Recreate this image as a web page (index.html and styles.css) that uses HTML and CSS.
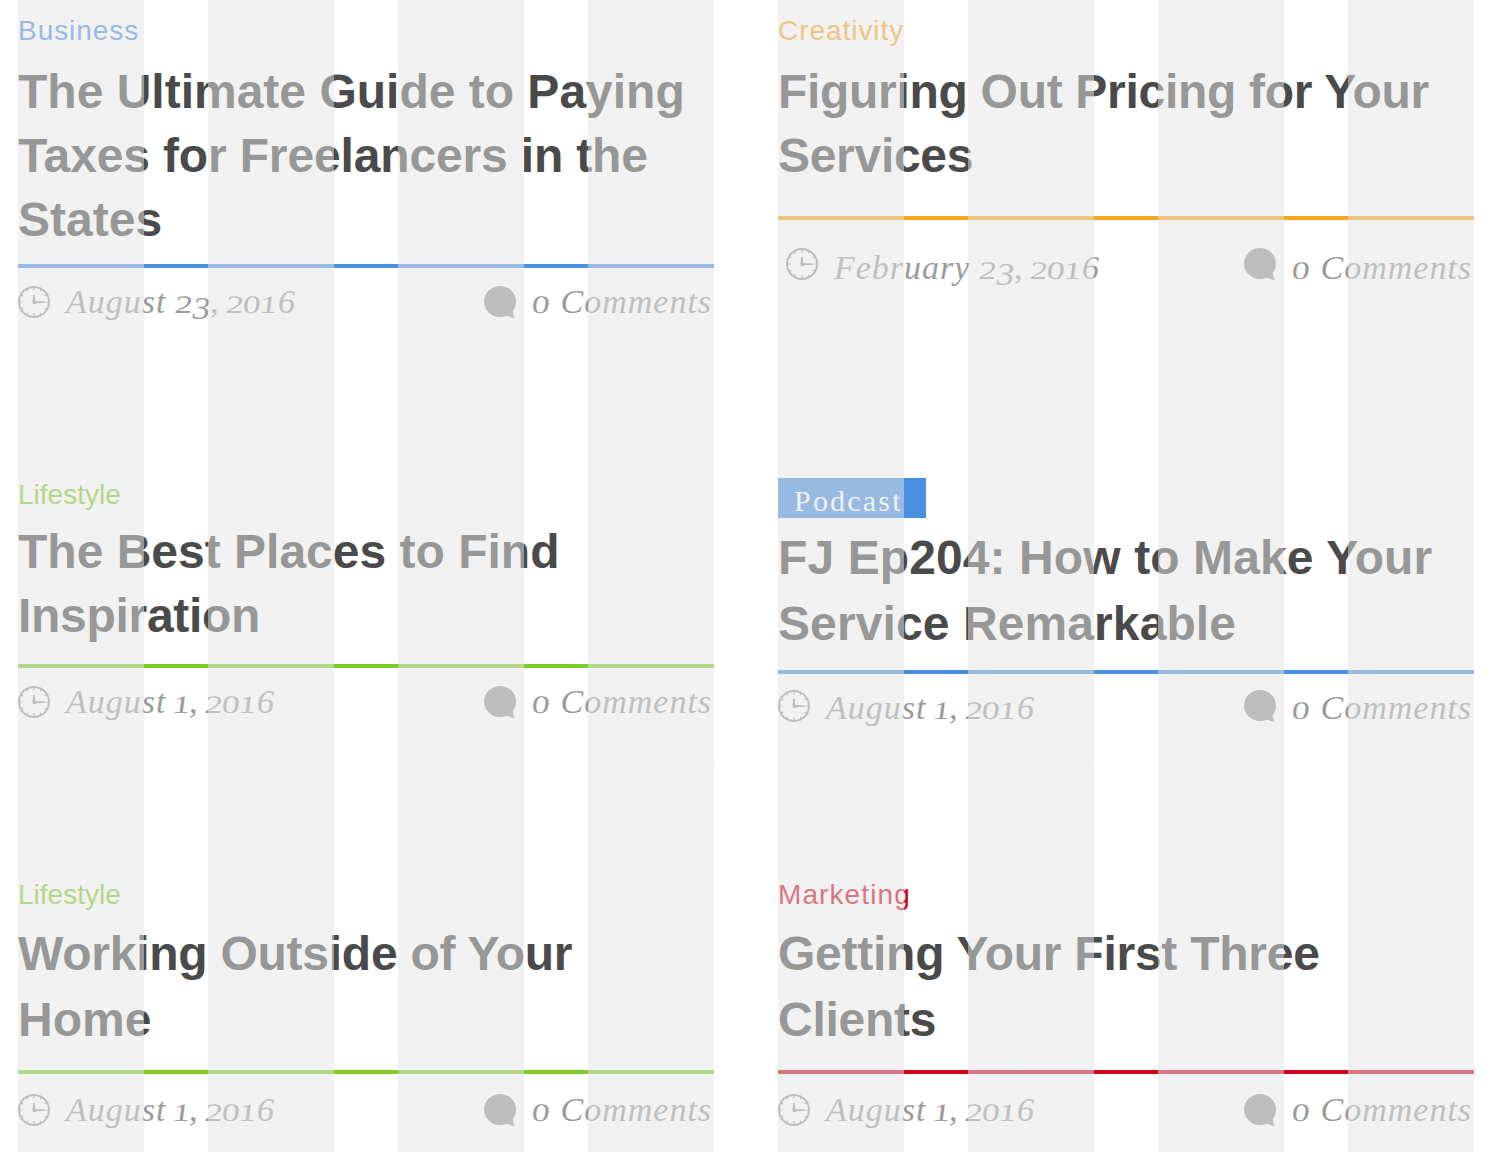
FILE: index.html
```html
<!DOCTYPE html>
<html lang="en">
<head>
<meta charset="utf-8">
<title>Articles</title>
<link rel="stylesheet" href="styles.css">
</head>
<body>
<svg class="defs" width="0" height="0" aria-hidden="true">
  <symbol id="clock" viewBox="0 0 32 32">
    <circle cx="16" cy="16" r="15" fill="none" stroke="currentColor" stroke-width="2"/>
    <g fill="none" stroke="currentColor" stroke-width="1.2">
      <path d="M16 1v3.500M16 27.500V31M1 16h3.500M27.500 16H31M8.500 3l1.300 2.300M22.200 26.700l1.300 2.300M3 8.500l2.300 1.300M26.700 22.200l2.300 1.300M23.500 3l-1.300 2.300M9.800 26.700L8.500 29M29 8.500l-2.300 1.300M5.300 22.200L3 23.500"/>
    </g>
    <path d="M15.200 9h1.600l.4 5.500 1.200.7H26.500v1.700h-8.100A2.200 2.200 0 1 1 14.600 14.600z" fill="currentColor"/>
  </symbol>
  <symbol id="bubble" viewBox="0 0 32 32">
    <path d="M16 0C24.800 0 32 6.900 32 15.500c0 3.800-1.200 7-3.300 9.500.2 2.800.8 5 2 7-2.700-.3-5-1.100-7.200-2.600A16.500 16.500 0 0 1 16 31C7.200 31 0 24.100 0 15.500S7.200 0 16 0z" fill="currentColor"/>
  </symbol>
</svg>
<main class="posts">
  <article class="post post-guide blue">
    <div class="category">Business</div>
    <h2>The Ultimate Guide to Paying<br><span class="tight">Taxes for Freelancers in the</span><br>States</h2>
    <footer class="meta">
      <div class="date"><svg class="icon"><use href="#clock"/></svg><time>August <span class="num"><i class="low">2</i><i class="drop">3</i>, <i class="low">2</i><i class="low">0</i><i class="low">1</i>6</span></time></div>
      <div class="comments"><svg class="icon"><use href="#bubble"/></svg><span class="text"><i class="low">0</i> Comments</span></div>
    </footer>
  </article>
  <article class="post post-pricing orange">
    <div class="category">Creativity</div>
    <h2>Figuring Out Pricing for Your<br>Services</h2>
    <footer class="meta">
      <div class="date"><svg class="icon"><use href="#clock"/></svg><time>February <span class="num"><i class="low">2</i><i class="drop">3</i>, <i class="low">2</i><i class="low">0</i><i class="low">1</i>6</span></time></div>
      <div class="comments"><svg class="icon"><use href="#bubble"/></svg><span class="text"><i class="low">0</i> Comments</span></div>
    </footer>
  </article>
  <article class="post post-places green">
    <div class="category">Lifestyle</div>
    <h2>The Best Places to Find<br><span class="tight">Inspiration</span></h2>
    <footer class="meta">
      <div class="date"><svg class="icon"><use href="#clock"/></svg><time>August <span class="num"><i class="low one">1</i>, <i class="low">2</i><i class="low">0</i><i class="low">1</i>6</span></time></div>
      <div class="comments"><svg class="icon"><use href="#bubble"/></svg><span class="text"><i class="low">0</i> Comments</span></div>
    </footer>
  </article>
  <article class="post post-podcast blue">
    <div class="badge">Podcast</div>
    <h2>FJ Ep204: How to Make Your<br>Service Remarkable</h2>
    <footer class="meta">
      <div class="date"><svg class="icon"><use href="#clock"/></svg><time>August <span class="num"><i class="low one">1</i>, <i class="low">2</i><i class="low">0</i><i class="low">1</i>6</span></time></div>
      <div class="comments"><svg class="icon"><use href="#bubble"/></svg><span class="text"><i class="low">0</i> Comments</span></div>
    </footer>
  </article>
  <article class="post post-last green">
    <div class="category">Lifestyle</div>
    <h2><span class="tight">Working Outside of Your</span><br>Home</h2>
    <footer class="meta">
      <div class="date"><svg class="icon"><use href="#clock"/></svg><time>August <span class="num"><i class="low one">1</i>, <i class="low">2</i><i class="low">0</i><i class="low">1</i>6</span></time></div>
      <div class="comments"><svg class="icon"><use href="#bubble"/></svg><span class="text"><i class="low">0</i> Comments</span></div>
    </footer>
  </article>
  <article class="post post-last red">
    <div class="category">Marketing</div>
    <h2><span class="tight">Getting Your First Three</span><br><span class="tight">Clients</span></h2>
    <footer class="meta">
      <div class="date"><svg class="icon"><use href="#clock"/></svg><time>August <span class="num"><i class="low one">1</i>, <i class="low">2</i><i class="low">0</i><i class="low">1</i>6</span></time></div>
      <div class="comments"><svg class="icon"><use href="#bubble"/></svg><span class="text"><i class="low">0</i> Comments</span></div>
    </footer>
  </article>
</main>
</body>
</html>
```
FILE: styles.css
```css
* { box-sizing: border-box; }

body {
  margin: 0;
  background: #fff;
  color: #4a4a4a;
  font-family: "Liberation Sans", Arial, sans-serif;
}

.defs { position: absolute; }

.posts {
  position: relative;
  display: grid;
  grid-template-columns: 696px 696px;
  grid-template-rows: 464px 400px 288px;
  column-gap: 64px;
  width: 1496px;
  height: 1152px;
  padding-left: 18px;
  overflow: hidden;
}

/* translucent layout columns laid over the content */
.posts::after {
  content: "";
  position: absolute;
  top: 0;
  bottom: 0;
  left: 18px;
  width: 1456px;
  background: repeating-linear-gradient(to right,
    rgba(228, 228, 228, .5) 0 126px, transparent 126px 190px);
}

.post {
  --title-gap: 9px;
  --rule-gap: 16px;
  --meta-gap: 18px;
  --text-shift: 0px;
  --leading: 64px;
  --tight: -.15px;
  padding-top: 15px;
}

.blue { --accent: #4a90e2; }
.orange { --accent: #f5a623; }
.green { --accent: #7ccc2a; }
.red { --accent: #d0021b; }

.post-guide { --title-gap: 13px; --rule-gap: 12px; }
.post-pricing { --title-gap: 13px; --rule-gap: 28px; --meta-gap: 28px; --text-shift: 4px; }
.post-places { --tight: -.3px; }
.post-podcast { --title-gap: 7px; --rule-gap: 13px; --meta-gap: 16px; --text-shift: 2px; --leading: 66px; padding-top: 14px; }
.post-last { --title-gap: 10px; --rule-gap: 17px; --meta-gap: 20px; --leading: 66px; --tight: -.25px; }

.category {
  color: var(--accent);
  font-size: 28px;
  line-height: 32px;
  letter-spacing: .95px;
}
.green .category { letter-spacing: 0; }
.red .category { letter-spacing: 1.1px; }

.badge {
  width: 148px;
  height: 40px;
  padding-left: 16px;
  background: var(--accent);
  color: #fff;
  font: 30px/46px "Liberation Serif", Georgia, serif;
  letter-spacing: 2.2px;
}

h2 {
  margin: var(--title-gap) 0 0;
  font-size: 48px;
  font-weight: 700;
  line-height: var(--leading);
  white-space: nowrap;
}
.tight { letter-spacing: var(--tight); }
.post-pricing h2 { letter-spacing: -.3px; }
.post-podcast h2 { letter-spacing: .1px; }

.meta {
  display: flex;
  margin-top: var(--rule-gap);
  padding-top: var(--meta-gap);
  border-top: 4px solid var(--accent);
  color: #9b9b9b;
  font: italic 34px/32px "Liberation Serif", Georgia, serif;
  letter-spacing: 1px;
  white-space: nowrap;
}

.date, .comments { display: flex; gap: 16px; }
.date { width: 466px; }
.comments { gap: 17px; }
.post-pricing .date { padding-left: 8px; }
time, .text { margin-top: var(--text-shift); }

.icon {
  flex: none;
  width: 32px;
  height: 32px;
  color: #979797;
}

.num { letter-spacing: 0; }

/* old-style figures */
.low, .drop { display: inline-block; transform-origin: 50% 27px; }
.low { transform: scale(1.05, .74) skewX(5deg); }
.drop { transform: translateY(6px) scale(1.05, .95); }
.one { margin: 0 -2px; }
```
